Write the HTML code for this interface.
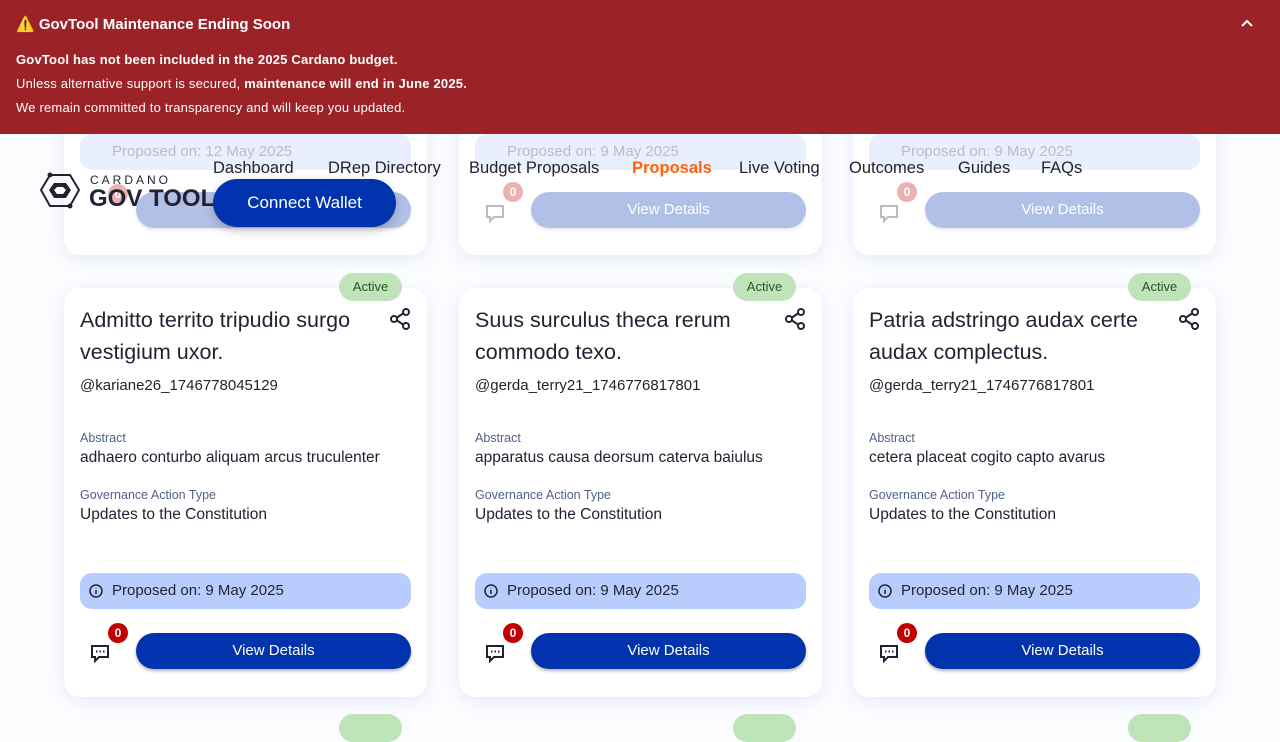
<!DOCTYPE html>
<html><head><meta charset="utf-8"><style>
*{box-sizing:border-box;margin:0;padding:0}
body{width:1280px;height:720px;overflow:hidden;background:#fbfcfe;font-family:"Liberation Sans",sans-serif;color:#242232;position:relative}
.banner{position:absolute;left:0;top:0;width:1280px;height:134px;background:#9b2226;color:#fff;z-index:5}
.banner h1{position:absolute;left:16px;top:15px;font-size:15px;font-weight:bold}
.banner p{position:absolute;left:16px;font-size:13px;letter-spacing:.2px}
.card{position:absolute;width:363px;background:#fff;border-radius:16px;box-shadow:0 4px 16px rgba(80,100,220,.12)}
.fade{opacity:.3}
.title{position:absolute;left:16px;top:16px;font-size:21.5px;line-height:32px;width:310px}
.share{position:absolute;right:16px;top:20px}
.user{position:absolute;left:16px;top:89px;font-size:15px}
.lbl{position:absolute;left:16px;font-size:12.5px;color:#506288}
.val{position:absolute;left:16px;font-size:15.5px}
.pill{position:absolute;left:16px;width:331px;height:36px;border-radius:12px;background:#b8cdfd;font-size:15px;line-height:36px;padding-left:32px}
.pill svg{position:absolute;left:9px;top:11px}
.btn{position:absolute;left:72px;width:275px;height:36px;border-radius:18px;background:#0033ad;color:#fff;text-align:center;line-height:36px;font-size:15px;box-shadow:0 2px 3px rgba(0,0,0,.3)}
.cm{position:absolute;left:26px}
.bd{position:absolute;left:44px;width:20px;height:20px;border-radius:10px;background:#c10000;color:#fff;font-size:12px;font-weight:bold;text-align:center;line-height:20px}
.act{position:absolute;width:63px;height:28px;border-radius:14px;background:#c0e4ba;color:#1f5b1a;font-size:13px;text-align:center;line-height:28px}
.nav{position:absolute;top:159px;font-size:16.5px;z-index:3}
</style></head><body>
<div class="banner">
<h1>⚠️ GovTool Maintenance Ending Soon</h1>
<svg style="position:absolute;right:26px;top:18px" width="14" height="10" viewBox="0 0 14 10"><path d="M2 8l5-5 5 5" stroke="#fff" stroke-width="2" fill="none"/></svg>
<p style="top:52px;font-weight:bold">GovTool has not been included in the 2025 Cardano budget.</p>
<p style="top:76px">Unless alternative support is secured, <b>maintenance will end in June 2025.</b></p>
<p style="top:100px">We remain committed to transparency and will keep you updated.</p>
</div>

<div class="card" style="left:64px;top:40px;height:215px"><div class="fade">
<div class="pill" style="top:94px;background:#b8cdfd">Proposed on: 12 May 2025</div>
<div class="btn" style="top:152px">View Details</div><div class="bd" style="top:144px">0</div></div></div>
<div class="card" style="left:459px;top:40px;height:215px"><div class="fade">
<div class="pill" style="top:94px">Proposed on: 9 May 2025</div>
<svg class="cm" style="top:163px" width="20" height="20" viewBox="0 0 20 20"><path d="M2 3h16v11H9l-4 4v-4H2z" stroke="#242232" stroke-width="2" fill="none"/></svg>
<div class="btn" style="top:152px">View Details</div><div class="bd" style="top:142px">0</div></div></div>
<div class="card" style="left:853px;top:40px;height:215px"><div class="fade">
<div class="pill" style="top:94px">Proposed on: 9 May 2025</div>
<svg class="cm" style="top:163px" width="20" height="20" viewBox="0 0 20 20"><path d="M2 3h16v11H9l-4 4v-4H2z" stroke="#242232" stroke-width="2" fill="none"/></svg>
<div class="btn" style="top:152px">View Details</div><div class="bd" style="top:142px">0</div></div></div>

<svg style="position:absolute;left:40px;top:172px;z-index:3" width="40" height="37" viewBox="0 0 40 37"><path d="M10 3h20l9 15-9 16H10L1 18z" stroke="#242232" stroke-width="2" fill="none"/><path d="M14 11h12l5 7-5 8H14l-5-8z" fill="#242232"/><path d="M17 15h6l3 3-3 4h-6l-3-4z" fill="#fff"/><circle cx="10" cy="3" r="2.5" fill="#242232"/><circle cx="30" cy="34" r="2.5" fill="#242232"/></svg>
<div style="position:absolute;left:90px;top:173px;font-size:12px;letter-spacing:3px;z-index:3">CARDANO</div>
<div style="position:absolute;left:89px;top:185px;font-size:24px;font-weight:bold;z-index:3">GOV TOOL</div>
<div class="nav" style="left:213px">Dashboard</div>
<div class="nav" style="left:328px">DRep Directory</div>
<div class="nav" style="left:469px">Budget Proposals</div>
<div class="nav" style="left:632px;color:#ff640a;font-weight:bold">Proposals</div>
<div class="nav" style="left:739px">Live Voting</div>
<div class="nav" style="left:849px">Outcomes</div>
<div class="nav" style="left:958px">Guides</div>
<div class="nav" style="left:1041px">FAQs</div>
<div style="position:absolute;left:213px;top:179px;width:183px;height:48px;border-radius:24px;background:#0033ad;color:#fff;font-size:17px;text-align:center;line-height:48px;z-index:3;box-shadow:0 4px 10px rgba(0,0,0,.2)">Connect Wallet</div>

<div class="act" style="left:339px;top:273px;z-index:2">Active</div>
<div class="act" style="left:733px;top:273px;z-index:2">Active</div>
<div class="act" style="left:1128px;top:273px;z-index:2">Active</div>

<div class="card" style="left:64px;top:288px;height:409px">
<div class="title">Admitto territo tripudio surgo vestigium uxor.</div>
<svg class="share" width="22" height="22" viewBox="0 0 22 22"><circle cx="17" cy="4" r="3" stroke="#242232" stroke-width="2" fill="none"/><circle cx="5" cy="11" r="3" stroke="#242232" stroke-width="2" fill="none"/><circle cx="17" cy="18" r="3" stroke="#242232" stroke-width="2" fill="none"/><path d="M8 9.5l6-4M8 12.5l6 4" stroke="#242232" stroke-width="2"/></svg>
<div class="user">@kariane26_1746778045129</div>
<div class="lbl" style="top:143px">Abstract</div><div class="val" style="top:161px">adhaero conturbo aliquam arcus truculenter</div>
<div class="lbl" style="top:200px">Governance Action Type</div><div class="val" style="top:218px">Updates to the Constitution</div>
<div class="pill" style="top:285px"><svg width="14" height="14" viewBox="0 0 14 14"><circle cx="7" cy="7" r="6" stroke="#242232" stroke-width="1.5" fill="none"/><path d="M7 6v4M7 4v.5" stroke="#242232" stroke-width="1.5"/></svg>Proposed on: 9 May 2025</div>
<svg class="cm" style="top:355px" width="20" height="20" viewBox="0 0 20 20"><path d="M2 3h16v11H9l-4 4v-4H2z" stroke="#242232" stroke-width="2" fill="none"/><path d="M6 8.5h1.5M9.5 8.5h1.5M13 8.5h1.5" stroke="#242232" stroke-width="2"/></svg>
<div class="bd" style="top:335px">0</div><div class="btn" style="top:345px">View Details</div>
</div>
<div class="card" style="left:459px;top:288px;height:409px">
<div class="title">Suus surculus theca rerum commodo texo.</div>
<svg class="share" width="22" height="22" viewBox="0 0 22 22"><circle cx="17" cy="4" r="3" stroke="#242232" stroke-width="2" fill="none"/><circle cx="5" cy="11" r="3" stroke="#242232" stroke-width="2" fill="none"/><circle cx="17" cy="18" r="3" stroke="#242232" stroke-width="2" fill="none"/><path d="M8 9.5l6-4M8 12.5l6 4" stroke="#242232" stroke-width="2"/></svg>
<div class="user">@gerda_terry21_1746776817801</div>
<div class="lbl" style="top:143px">Abstract</div><div class="val" style="top:161px">apparatus causa deorsum caterva baiulus</div>
<div class="lbl" style="top:200px">Governance Action Type</div><div class="val" style="top:218px">Updates to the Constitution</div>
<div class="pill" style="top:285px"><svg width="14" height="14" viewBox="0 0 14 14"><circle cx="7" cy="7" r="6" stroke="#242232" stroke-width="1.5" fill="none"/><path d="M7 6v4M7 4v.5" stroke="#242232" stroke-width="1.5"/></svg>Proposed on: 9 May 2025</div>
<svg class="cm" style="top:355px" width="20" height="20" viewBox="0 0 20 20"><path d="M2 3h16v11H9l-4 4v-4H2z" stroke="#242232" stroke-width="2" fill="none"/><path d="M6 8.5h1.5M9.5 8.5h1.5M13 8.5h1.5" stroke="#242232" stroke-width="2"/></svg>
<div class="bd" style="top:335px">0</div><div class="btn" style="top:345px">View Details</div>
</div>
<div class="card" style="left:853px;top:288px;height:409px">
<div class="title">Patria adstringo audax certe audax complectus.</div>
<svg class="share" width="22" height="22" viewBox="0 0 22 22"><circle cx="17" cy="4" r="3" stroke="#242232" stroke-width="2" fill="none"/><circle cx="5" cy="11" r="3" stroke="#242232" stroke-width="2" fill="none"/><circle cx="17" cy="18" r="3" stroke="#242232" stroke-width="2" fill="none"/><path d="M8 9.5l6-4M8 12.5l6 4" stroke="#242232" stroke-width="2"/></svg>
<div class="user">@gerda_terry21_1746776817801</div>
<div class="lbl" style="top:143px">Abstract</div><div class="val" style="top:161px">cetera placeat cogito capto avarus</div>
<div class="lbl" style="top:200px">Governance Action Type</div><div class="val" style="top:218px">Updates to the Constitution</div>
<div class="pill" style="top:285px"><svg width="14" height="14" viewBox="0 0 14 14"><circle cx="7" cy="7" r="6" stroke="#242232" stroke-width="1.5" fill="none"/><path d="M7 6v4M7 4v.5" stroke="#242232" stroke-width="1.5"/></svg>Proposed on: 9 May 2025</div>
<svg class="cm" style="top:355px" width="20" height="20" viewBox="0 0 20 20"><path d="M2 3h16v11H9l-4 4v-4H2z" stroke="#242232" stroke-width="2" fill="none"/><path d="M6 8.5h1.5M9.5 8.5h1.5M13 8.5h1.5" stroke="#242232" stroke-width="2"/></svg>
<div class="bd" style="top:335px">0</div><div class="btn" style="top:345px">View Details</div>
</div>

<div class="act" style="left:339px;top:714px"></div>
<div class="act" style="left:733px;top:714px"></div>
<div class="act" style="left:1128px;top:714px"></div>
</body></html>
